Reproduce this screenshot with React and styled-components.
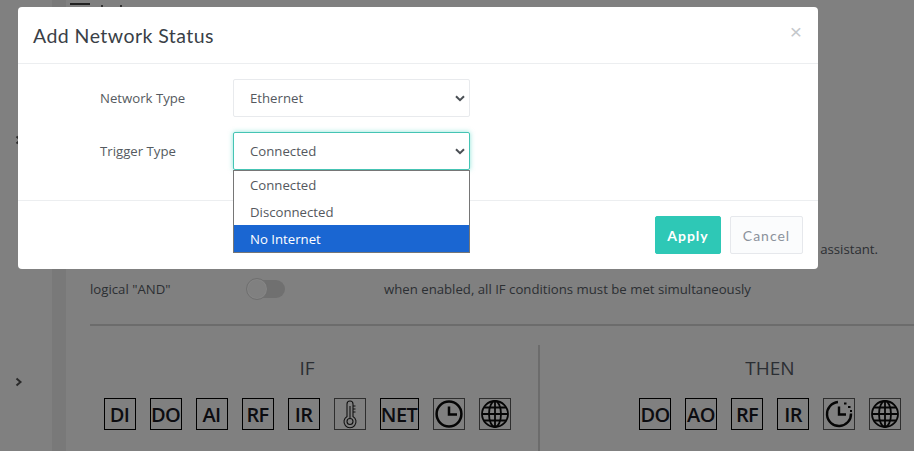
import React from 'react';
import styled, { createGlobalStyle } from 'styled-components';

const Global = createGlobalStyle`
  html, body { margin: 0; padding: 0; background: #808080; }
  * { box-sizing: border-box; }
`;

const Page = styled.div`
  position: relative;
  width: 914px;
  height: 451px;
  overflow: hidden;
  display: grid;
  grid-template-columns: 52px 14px 1fr;
  background: #808080;
  font-family: "Open Sans", "Noto Sans", sans-serif;
  font-size: 13.2px;
  color: #2c2f33;
`;

const Sidebar = styled.div`
  display: flex;
  flex-direction: column;
  padding: 135px 0 0 14px;
  gap: 232px;
`;

const Band = styled.div`
  background: #797979;
`;

const Main = styled.div`
  display: flex;
  flex-direction: column;
  padding-left: 24px;
`;

const TopBar = styled.div`
  display: flex;
  align-items: flex-start;
  height: 240px;
  margin-left: -20px;
  padding-top: 3px;
  gap: 11px;
`;

const Hamburger = styled.div`
  width: 20px;
  height: 2px;
  background: #222;
`;

const Ticks = styled.div`
  display: flex;
  gap: 17px;
`;

const Tick = styled.div`
  width: 2px;
  height: 4px;
  margin-top: 2px;
  background: #333;
`;

const HintRow = styled.div`
  height: 18px;
  text-align: right;
  padding-right: 36px;
  line-height: 18px;
  white-space: nowrap;
`;

const OptionRow = styled.div`
  display: grid;
  grid-template-columns: 156px 138px 1fr;
  align-items: center;
  height: 22px;
  margin-top: 20px;
`;

const Toggle = styled.div`
  position: relative;
  width: 39px;
  height: 22px;
  display: flex;
  align-items: center;
  justify-content: flex-end;
`;

const Track = styled.div`
  width: 37px;
  height: 18px;
  border-radius: 9px;
  background: #707070;
`;

const Knob = styled.div`
  position: absolute;
  left: 0;
  top: 0;
  width: 22px;
  height: 22px;
  border-radius: 50%;
  background: #808080;
  border: 1px solid #6f6f6f;
  box-shadow: inset 0 0 0 1px #858585;
`;

const Rule = styled.div`
  height: 2px;
  margin-top: 24px;
  background: #6c6c6c;
`;

const Columns = styled.div`
  display: grid;
  grid-template-columns: 450px 1fr;
  margin-top: 19px;
  flex: 1;
`;

const Column = styled.div`
  display: flex;
  flex-direction: column;
  align-items: center;
  padding: ${(p) => p.$pad};
  border-right: ${(p) => (p.$divided ? '2px solid #6c6c6c' : 'none')};
`;

const ColumnTitle = styled.div`
  font-size: 19px;
  line-height: 24px;
  margin: 11px 0 0;
  color: #2b2e33;
`;

const IconRow = styled.div`
  display: flex;
  gap: ${(p) => p.$gap}px;
  margin-top: 18px;
`;

const Tool = styled.div`
  width: ${(p) => p.$w || 32}px;
  height: 32px;
  display: flex;
  align-items: center;
  justify-content: center;
  border: 1px solid ${(p) => (p.$soft ? '#2e2e2e' : '#000')};
  font-size: 20px;
  font-weight: 600;
  letter-spacing: -0.6px;
  color: #0c0c10;
`;

const Modal = styled.div`
  position: absolute;
  left: 18px;
  top: 7px;
  width: 800px;
  height: 262px;
  background: #fff;
  border-radius: 4px;
  display: flex;
  flex-direction: column;
`;

const ModalHeader = styled.div`
  height: 57px;
  flex: none;
  display: flex;
  align-items: center;
  justify-content: space-between;
  padding: 0 16px 0 15px;
  border-bottom: 1px solid #eceef0;
`;

const Title = styled.div`
  font-family: Lato, "Open Sans", sans-serif;
  font-size: 19.5px;
  letter-spacing: 0.45px;
  color: #3a3f47;
`;

const Close = styled.div`
  font-family: "Liberation Sans", sans-serif;
  font-size: 21px;
  line-height: 20px;
  margin-top: -6px;
  color: #c4c7cb;
`;

const ModalBody = styled.div`
  height: 137px;
  flex: none;
  display: flex;
  flex-direction: column;
  gap: 15px;
  padding: 15px 0 0 82px;
  border-bottom: 1px solid #eceef0;
`;

const FieldRow = styled.div`
  display: flex;
  align-items: center;
`;

const FieldLabel = styled.div`
  width: 133px;
  color: #555a60;
`;

const SelectWrap = styled.div`
  position: relative;
  width: 237px;
`;

const SelectBox = styled.div`
  height: 38px;
  display: flex;
  align-items: center;
  justify-content: space-between;
  padding: 0 3px 0 16px;
  color: #54585e;
  background: #fff;
  border: 1px solid ${(p) => (p.$focus ? '#45c4b4' : '#e8eaed')};
  border-radius: 2px;
  box-shadow: ${(p) => (p.$focus ? '0 0 5px rgba(50, 205, 185, 0.55)' : 'none')};
`;

const Chevron = () => (
  <svg width="12" height="12" viewBox="0 0 12 12" aria-hidden="true">
    <path d="M2 4.2 6 8.2 10 4.2" fill="none" stroke="#4a4f54" strokeWidth="2" />
  </svg>
);

const Dropdown = styled.div`
  position: absolute;
  left: 0;
  top: 38px;
  width: 237px;
  height: 83px;
  background: #fff;
  border: 1px solid #767676;
  z-index: 2;
`;

const Option = styled.div`
  height: 27px;
  line-height: 29px;
  padding-left: 16px;
  color: ${(p) => (p.$active ? '#fff' : '#54585e')};
  background: ${(p) => (p.$active ? '#1a66d2' : 'transparent')};
`;

const ModalFooter = styled.div`
  flex: 1;
  display: flex;
  justify-content: flex-end;
  gap: 9px;
  padding: 15px 15px 0 0;
`;

const Button = styled.button`
  height: 38px;
  width: ${(p) => p.$w}px;
  padding: 0;
  font-family: Lato, "Open Sans", sans-serif;
  font-size: 14px;
  letter-spacing: 1px;
  font-weight: ${(p) => (p.$primary ? 700 : 400)};
  color: ${(p) => (p.$primary ? '#fff' : '#8b929c')};
  background: ${(p) => (p.$primary ? '#2ec8b6' : '#fbfcfd')};
  border: 1px solid ${(p) => (p.$primary ? '#2ec8b6' : '#e6e8ec')};
  border-radius: 2px;
`;

const SideArrow = () => (
  <svg width="10" height="10" viewBox="0 0 10 10" aria-hidden="true">
    <path d="M2.5 1.5 6.5 5 2.5 8.5" fill="none" stroke="#2a2a2a" strokeWidth="2" />
  </svg>
);

const Thermometer = () => (
  <svg width="30" height="30" viewBox="0 0 30 30" aria-hidden="true" fill="none" stroke="#111" strokeWidth="1.1">
    <path d="M12 17.5V5a3 3 0 0 1 6 0V17.5a6 6 0 1 1-6 0Z" />
    <circle cx="15" cy="22.5" r="3" />
    <path d="M15 19.5V7" />
    <path d="M18 7h2.5M18 10h2.5M18 13h2.5" />
  </svg>
);

const Clock = () => (
  <svg width="30" height="30" viewBox="0 0 30 30" aria-hidden="true" fill="none" stroke="#050505" strokeWidth="2.5">
    <circle cx="15" cy="15" r="12.4" />
    <path d="M15 7.5V15.5H23" />
  </svg>
);

const DashClock = () => (
  <svg width="30" height="30" viewBox="0 0 30 30" aria-hidden="true" fill="none" stroke="#050505" strokeWidth="2.4">
    <path d="M15 3A12 12 0 1 0 27 15.5" transform="rotate(-5 15 15)" />
    <path d="M15 7.5V15.5H22" />
    <path d="M20 4.5h2.5M24 8h2.5M26 12h2" strokeWidth="2.2" />
  </svg>
);

const Globe = () => (
  <svg width="30" height="30" viewBox="0 0 30 30" aria-hidden="true" fill="none" stroke="#050505" strokeWidth="1.8">
    <circle cx="15" cy="15" r="13" />
    <ellipse cx="15" cy="15" rx="6" ry="13" />
    <path d="M15 2V28M2 15H28M4 8.5H26M4 21.5H26" />
  </svg>
);

export default function App() {
  return (
    <>
      <Global />
      <Page>
        <Sidebar>
          <SideArrow />
          <SideArrow />
        </Sidebar>
        <Band />
        <Main>
          <TopBar>
            <Hamburger />
            <Ticks>
              <Tick />
              <Tick />
            </Ticks>
          </TopBar>
          <HintRow>assistant.</HintRow>
          <OptionRow>
            <span>logical "AND"</span>
            <Toggle>
              <Track />
              <Knob />
            </Toggle>
            <span>when enabled, all IF conditions must be met simultaneously</span>
          </OptionRow>
          <Rule />
          <Columns>
            <Column $divided $pad="0 14px 0 0">
              <ColumnTitle>IF</ColumnTitle>
              <IconRow $gap={14}>
                <Tool>DI</Tool>
                <Tool>DO</Tool>
                <Tool>AI</Tool>
                <Tool>RF</Tool>
                <Tool>IR</Tool>
                <Tool $soft><Thermometer /></Tool>
                <Tool $w={39}>NET</Tool>
                <Tool $soft><Clock /></Tool>
                <Tool $soft><Globe /></Tool>
              </IconRow>
            </Column>
            <Column $pad="0 13px 0 99px">
              <ColumnTitle>THEN</ColumnTitle>
              <IconRow $gap={14}>
                <Tool>DO</Tool>
                <Tool>AO</Tool>
                <Tool>RF</Tool>
                <Tool>IR</Tool>
                <Tool $soft><DashClock /></Tool>
                <Tool $soft><Globe /></Tool>
              </IconRow>
            </Column>
          </Columns>
        </Main>
        <Modal>
          <ModalHeader>
            <Title>Add Network Status</Title>
            <Close>×</Close>
          </ModalHeader>
          <ModalBody>
            <FieldRow>
              <FieldLabel>Network Type</FieldLabel>
              <SelectWrap>
                <SelectBox>Ethernet<Chevron /></SelectBox>
              </SelectWrap>
            </FieldRow>
            <FieldRow>
              <FieldLabel>Trigger Type</FieldLabel>
              <SelectWrap>
                <SelectBox $focus>Connected<Chevron /></SelectBox>
                <Dropdown>
                  <Option>Connected</Option>
                  <Option>Disconnected</Option>
                  <Option $active>No Internet</Option>
                </Dropdown>
              </SelectWrap>
            </FieldRow>
          </ModalBody>
          <ModalFooter>
            <Button $primary $w={66}>Apply</Button>
            <Button $w={73}>Cancel</Button>
          </ModalFooter>
        </Modal>
      </Page>
    </>
  );
}
